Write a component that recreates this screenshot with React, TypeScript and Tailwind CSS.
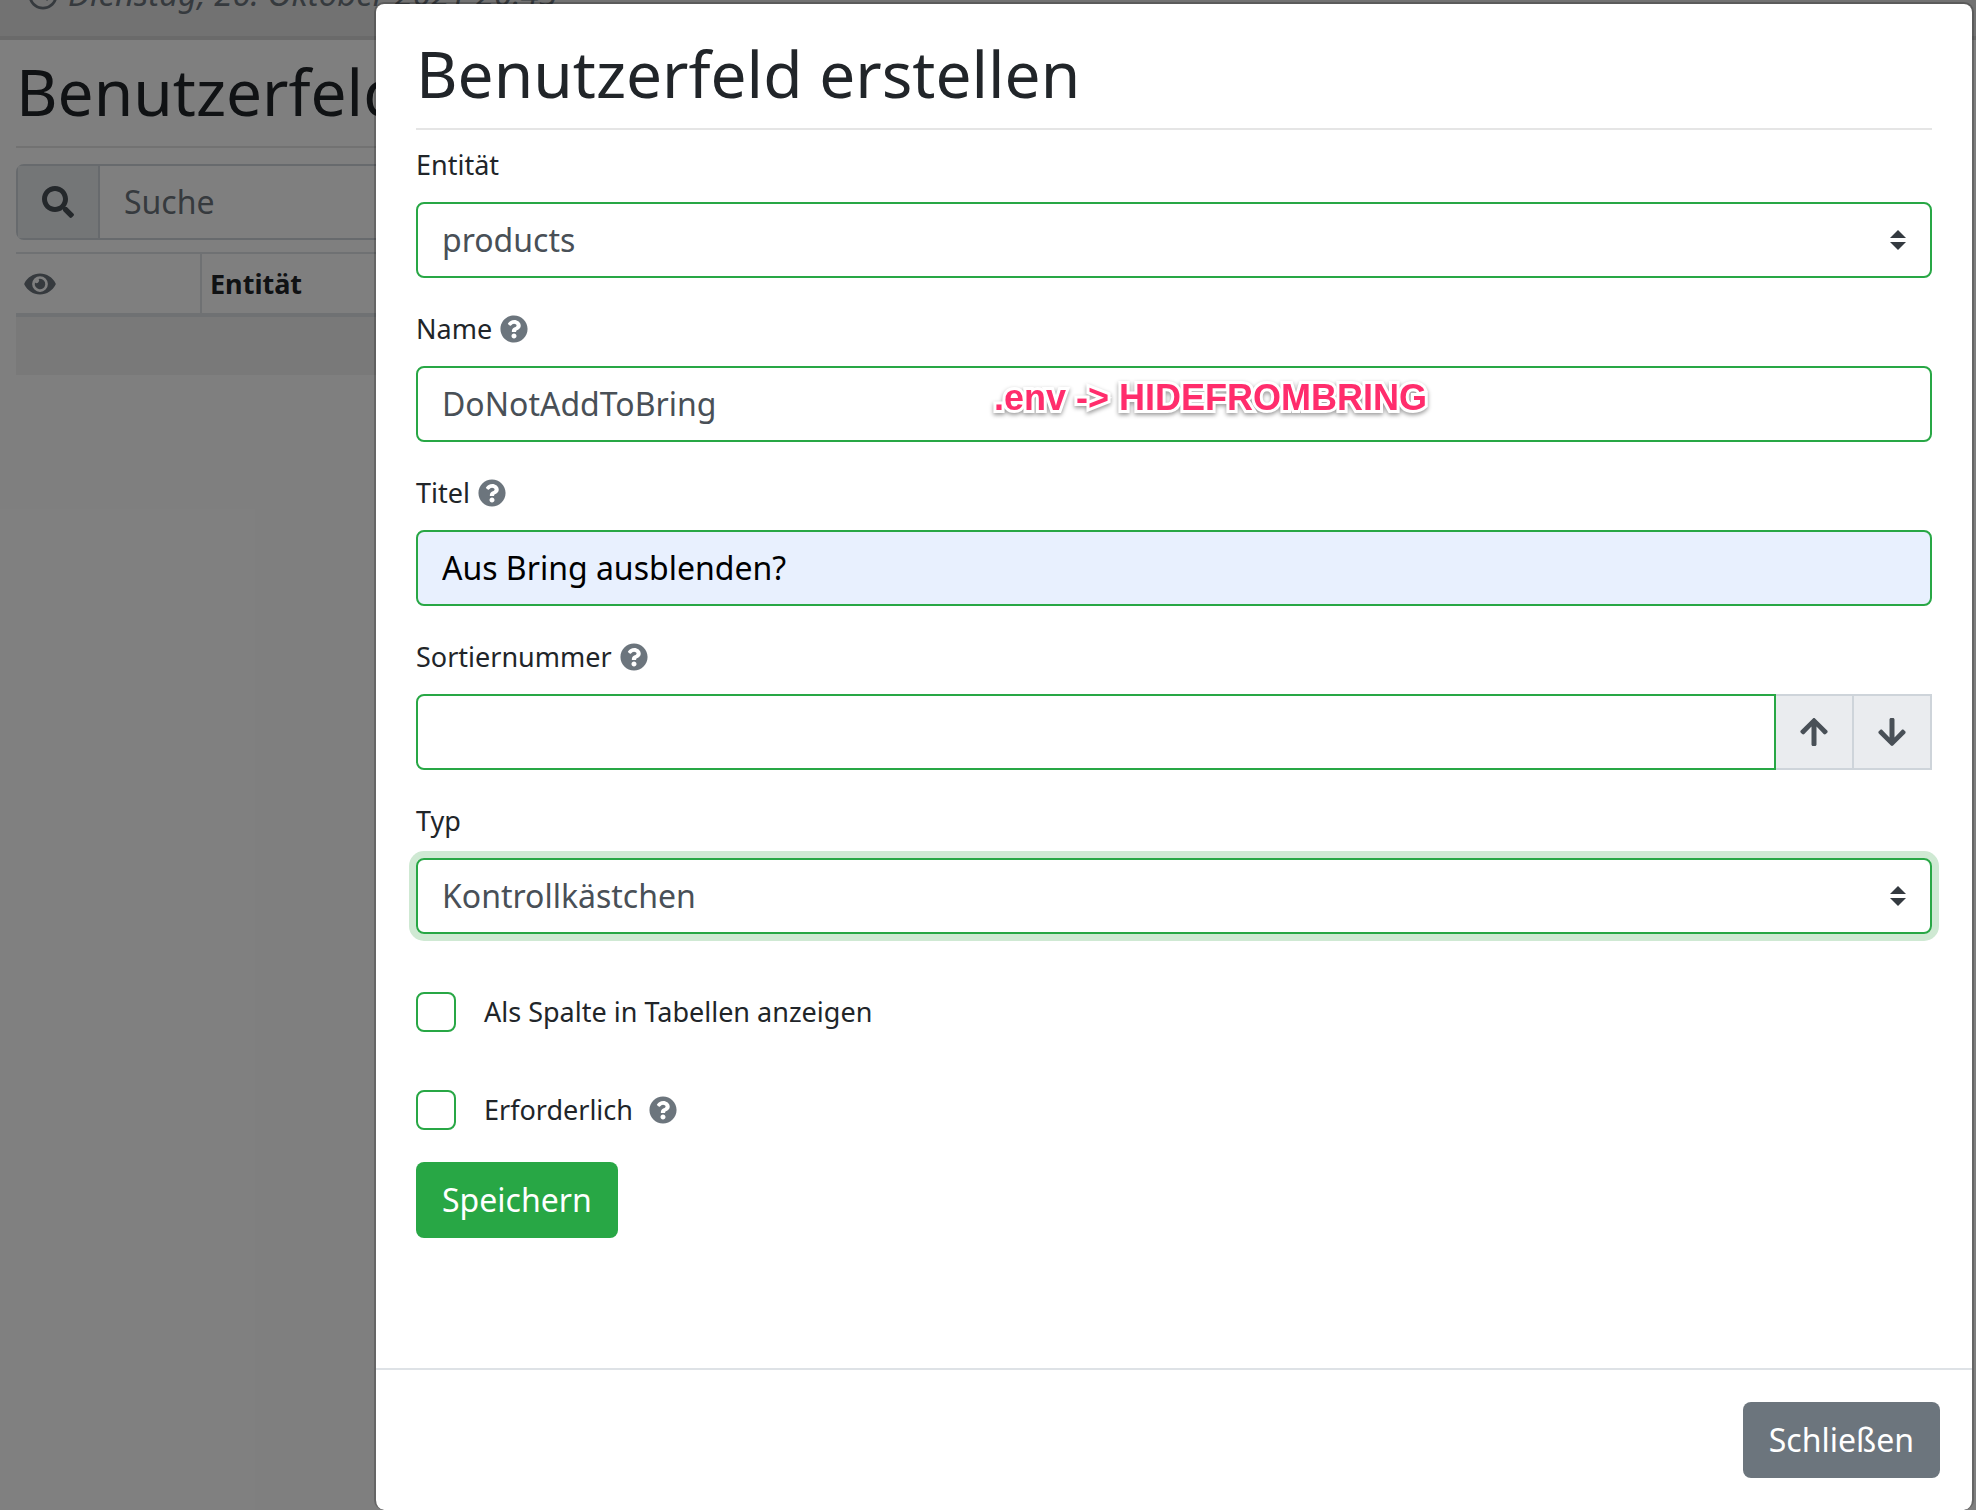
import React from "react";
import {
  FaArrowDown,
  FaArrowUp,
  FaEye,
  FaQuestionCircle,
  FaRegClock,
  FaSearch,
} from "react-icons/fa";

const control =
  "h-[76px] w-full min-w-0 rounded-lg border-2 border-[#28a745] px-6 text-[32px] leading-[48px] outline-none";

function Help() {
  return <FaQuestionCircle aria-label="Hilfe" className="size-7 shrink-0 text-[#6c757d]" />;
}

function Field({
  id,
  label,
  help,
  children,
}: {
  id: string;
  label: string;
  help?: boolean;
  children: React.ReactNode;
}) {
  return (
    <div className="mb-[30px]">
      <div className="mb-4 flex items-center gap-2">
        <label htmlFor={id} className="leading-[42px]">
          {label}
        </label>
        {help && <Help />}
      </div>
      {children}
    </div>
  );
}

function Select({ id, value, focused }: { id: string; value: string; focused?: boolean }) {
  return (
    <div className={focused ? "relative rounded-lg shadow-[0_0_0_7px_#cfe9d3]" : "relative rounded-lg"}>
      <select id={id} defaultValue={value} className={`${control} appearance-none bg-white text-[#495057]`}>
        <option>{value}</option>
      </select>
      <svg
        viewBox="0 0 16 20"
        className="pointer-events-none absolute top-7 right-[26px] h-5 w-4 fill-[#343a40]"
        aria-hidden="true"
      >
        <path d="M8 0 16 8H0zM8 20 0 12h16z" />
      </svg>
    </div>
  );
}

function Check({ id, label, help }: { id: string; label: string; help?: boolean }) {
  return (
    <div className="flex items-center">
      <input
        id={id}
        type="checkbox"
        className="size-10 shrink-0 appearance-none rounded-lg border-2 border-[#28a745] bg-white"
      />
      <label htmlFor={id} className="ml-7 leading-10">
        {label}
      </label>
      {help && (
        <span className="ml-4">
          <Help />
        </span>
      )}
    </div>
  );
}

export default function App() {
  return (
    <div className="relative min-h-screen overflow-hidden bg-white font-['Noto_Sans',sans-serif] text-[27px] text-[#212529]">
      <div aria-hidden="true" className="absolute inset-0 overflow-hidden whitespace-nowrap">
        <header className="flex h-10 items-end border-b-4 border-[#d5d5d5] bg-[#e5e5e5] px-7 pb-[18px] text-[#6c757d]">
          <FaRegClock className="mb-2 size-[30px] shrink-0" />
          <em className="ml-2.5 text-[33px] leading-[48px]">Dienstag, 26. Oktober 2021 20:45</em>
        </header>
        <main className="px-4">
          <h2 className="pt-3.5 text-[64px] leading-[76px]">Benutzerfelder</h2>
          <hr className="mt-4 border-t-2 border-black/10" />
          <div className="mt-4 flex h-[76px] rounded-lg border-2 border-[#ced4da]">
            <span className="flex w-[82px] items-center justify-center border-r-2 border-[#ced4da] bg-[#e9ecef] text-[#495057]">
              <FaSearch className="size-8" />
            </span>
            <input
              placeholder="Suche"
              tabIndex={-1}
              className="min-w-0 flex-1 px-6 text-[32px] placeholder:text-[#6c757d]"
            />
          </div>
          <table className="mt-3 w-full table-fixed border-collapse text-left">
            <thead>
              <tr className="h-[62px] border-t-2 border-b-4 border-[#dee2e6]">
                <th className="w-[185px] border-r-2 border-[#dee2e6] py-0 pl-2">
                  <FaEye className="h-7 w-8 text-[#6c757d]" />
                </th>
                <th className="py-0 pl-2 leading-[42px]">Entität</th>
              </tr>
            </thead>
            <tbody>
              <tr className="h-[60px] bg-black/5">
                <td colSpan={2} />
              </tr>
            </tbody>
          </table>
        </main>
      </div>
      <div className="absolute inset-0 bg-black/50" />

      <div
        role="dialog"
        aria-labelledby="dialog-title"
        className="relative mt-0.5 mr-0.5 ml-[374px] flex min-h-[calc(100vh-2px)] flex-col rounded-[10px] border-2 border-b-0 border-black/20 bg-white bg-clip-padding"
      >
        <form className="flex-1 px-10 pt-8" onSubmit={(e) => e.preventDefault()}>
          <h1 id="dialog-title" className="text-[64px] leading-[76px]">
            Benutzerfeld erstellen
          </h1>
          <hr className="mt-4 mb-3.5 border-t-2 border-black/10" />

          <Field id="entity" label="Entität">
            <Select id="entity" value="products" />
          </Field>
          <Field id="name" label="Name" help>
            <div className="relative">
              <input id="name" defaultValue="DoNotAddToBring" className={`${control} bg-white pb-0.5 text-[#495057]`} />
              <span className="pointer-events-none absolute top-3 left-[578px] text-4xl leading-10 font-bold whitespace-nowrap text-[#ff2d6c] drop-shadow-[0_2px_2px_rgba(0,0,0,0.4)] [font-family:'Liberation_Sans',sans-serif] [-webkit-text-stroke:6px_white] [paint-order:stroke_fill]">
                .env -&gt; HIDEFROMBRING
              </span>
            </div>
          </Field>
          <Field id="title" label="Titel" help>
            <input
              id="title"
              defaultValue="Aus Bring ausblenden?"
              className={`${control} bg-[#e8f0fe] pb-0.5 text-black`}
            />
          </Field>
          <Field id="sort" label="Sortiernummer" help>
            <div className="flex">
              <input id="sort" className={`${control} flex-1 rounded-r-none bg-white text-[#495057]`} />
              <button
                type="button"
                aria-label="Erhöhen"
                className="flex w-[78px] shrink-0 items-center justify-center border-y-2 border-r-2 border-[#ced4da] bg-[#eaecef] text-[#495057]"
              >
                <FaArrowUp className="size-8" />
              </button>
              <button
                type="button"
                aria-label="Verringern"
                className="flex w-[78px] shrink-0 items-center justify-center border-y-2 border-r-2 border-[#ced4da] bg-[#eaecef] text-[#495057]"
              >
                <FaArrowDown className="size-8" />
              </button>
            </div>
          </Field>
          <Field id="type" label="Typ">
            <Select id="type" value="Kontrollkästchen" focused />
          </Field>

          <div className="mt-[58px] flex flex-col gap-[58px]">
            <Check id="column" label="Als Spalte in Tabellen anzeigen" />
            <Check id="required" label="Erforderlich" help />
          </div>
          <button
            type="submit"
            className="mt-8 h-[76px] rounded-lg bg-[#28a745] px-[26px] text-[32px] text-white"
          >
            Speichern
          </button>
        </form>
        <footer className="flex justify-end border-t-2 border-[#dee2e6] p-8">
          <button type="button" className="h-[76px] rounded-lg bg-[#6c757d] px-[26px] text-[32px] text-white">
            Schließen
          </button>
        </footer>
      </div>
    </div>
  );
}
